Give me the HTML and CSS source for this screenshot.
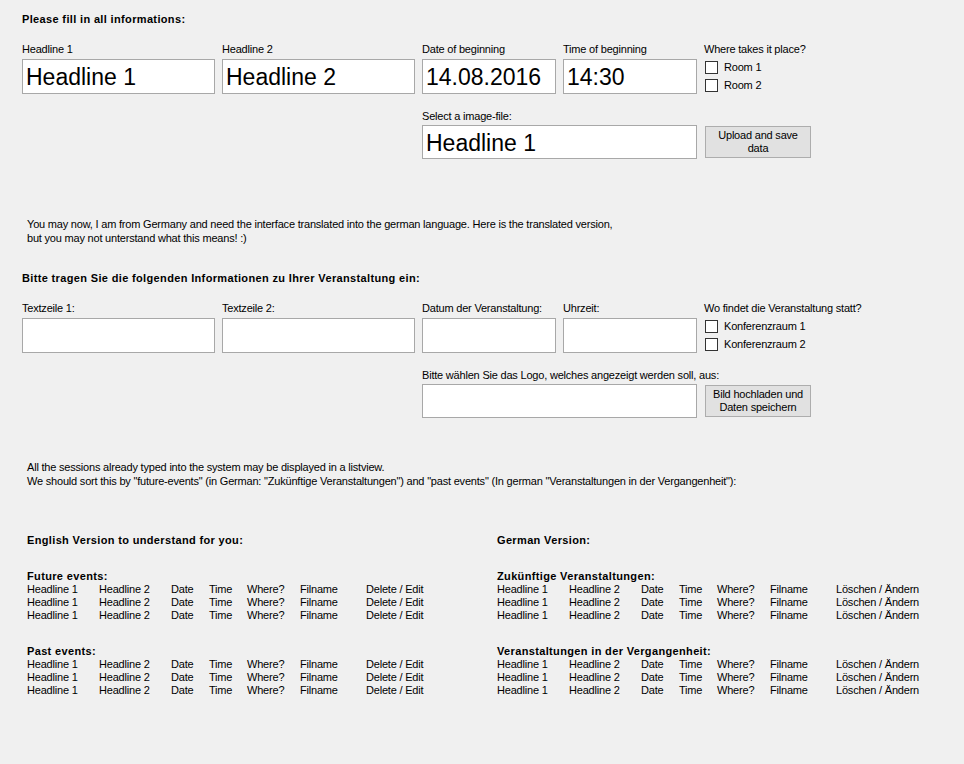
FILE: index.html
```html
<!DOCTYPE html>
<html lang="en">
<head>
<meta charset="utf-8">
<title>Event form</title>
<link rel="stylesheet" href="styles.css">
</head>
<body>
<div class="page">
  <section class="form form-en">
    <h2 class="title">Please fill in all informations:</h2>
    <div class="fields">
      <div class="field"><label class="lbl">Headline 1</label><div class="box">Headline 1</div></div>
      <div class="field"><label class="lbl">Headline 2</label><div class="box">Headline 2</div></div>
      <div class="field"><label class="lbl">Date of beginning</label><div class="box">14.08.2016</div></div>
      <div class="field"><label class="lbl">Time of beginning</label><div class="box">14:30</div></div>
      <div class="field places">
        <label class="lbl">Where takes it place?</label>
        <div class="check"><span class="cb"></span>Room 1</div>
        <div class="check"><span class="cb"></span>Room 2</div>
      </div>
      <div class="field file"><label class="lbl">Select a image-file:</label><div class="box box-file">Headline 1</div></div>
      <button class="btn">Upload and save<br>data</button>
    </div>
  </section>

  <p class="note note-1">You may now, I am from Germany and need the interface translated into the german language. Here is the translated version,<br>but you may not unterstand what this means! :)</p>

  <section class="form form-de">
    <h2 class="title">Bitte tragen Sie die folgenden Informationen zu Ihrer Veranstaltung ein:</h2>
    <div class="fields">
      <div class="field"><label class="lbl">Textzeile 1:</label><div class="box"></div></div>
      <div class="field"><label class="lbl">Textzeile 2:</label><div class="box"></div></div>
      <div class="field"><label class="lbl">Datum der Veranstaltung:</label><div class="box"></div></div>
      <div class="field"><label class="lbl">Uhrzeit:</label><div class="box"></div></div>
      <div class="field places">
        <label class="lbl">Wo findet die Veranstaltung statt?</label>
        <div class="check"><span class="cb"></span>Konferenzraum 1</div>
        <div class="check"><span class="cb"></span>Konferenzraum 2</div>
      </div>
      <div class="field file"><label class="lbl">Bitte wählen Sie das Logo, welches angezeigt werden soll, aus:</label><div class="box box-file"></div></div>
      <button class="btn">Bild hochladen und<br>Daten speichern</button>
    </div>
  </section>

  <p class="note note-2">All the sessions already typed into the system may be displayed in a listview.<br>We should sort this by "future-events" (in German: "Zukünftige Veranstaltungen") and "past events" (In german "Veranstaltungen in der Vergangenheit"):</p>

  <div class="lists">
    <div class="list-block list-en">
      <h3 class="title">English Version to understand for you:</h3>
      <h4 class="title sub">Future events:</h4>
      <div class="rows">
        <span>Headline 1</span><span>Headline 2</span><span>Date</span><span>Time</span><span>Where?</span><span>Filname</span><span>Delete / Edit</span>
        <span>Headline 1</span><span>Headline 2</span><span>Date</span><span>Time</span><span>Where?</span><span>Filname</span><span>Delete / Edit</span>
        <span>Headline 1</span><span>Headline 2</span><span>Date</span><span>Time</span><span>Where?</span><span>Filname</span><span>Delete / Edit</span>
      </div>
      <h4 class="title sub">Past events:</h4>
      <div class="rows">
        <span>Headline 1</span><span>Headline 2</span><span>Date</span><span>Time</span><span>Where?</span><span>Filname</span><span>Delete / Edit</span>
        <span>Headline 1</span><span>Headline 2</span><span>Date</span><span>Time</span><span>Where?</span><span>Filname</span><span>Delete / Edit</span>
        <span>Headline 1</span><span>Headline 2</span><span>Date</span><span>Time</span><span>Where?</span><span>Filname</span><span>Delete / Edit</span>
      </div>
    </div>
    <div class="list-block list-de">
      <h3 class="title">German Version:</h3>
      <h4 class="title sub">Zukünftige Veranstaltungen:</h4>
      <div class="rows">
        <span>Headline 1</span><span>Headline 2</span><span>Date</span><span>Time</span><span>Where?</span><span>Filname</span><span>Löschen / Ändern</span>
        <span>Headline 1</span><span>Headline 2</span><span>Date</span><span>Time</span><span>Where?</span><span>Filname</span><span>Löschen / Ändern</span>
        <span>Headline 1</span><span>Headline 2</span><span>Date</span><span>Time</span><span>Where?</span><span>Filname</span><span>Löschen / Ändern</span>
      </div>
      <h4 class="title sub">Veranstaltungen in der Vergangenheit:</h4>
      <div class="rows">
        <span>Headline 1</span><span>Headline 2</span><span>Date</span><span>Time</span><span>Where?</span><span>Filname</span><span>Löschen / Ändern</span>
        <span>Headline 1</span><span>Headline 2</span><span>Date</span><span>Time</span><span>Where?</span><span>Filname</span><span>Löschen / Ändern</span>
        <span>Headline 1</span><span>Headline 2</span><span>Date</span><span>Time</span><span>Where?</span><span>Filname</span><span>Löschen / Ändern</span>
      </div>
    </div>
  </div>
</div>
</body>
</html>
```

FILE: styles.css
```css
html, body {
  margin: 0;
  padding: 0;
  background: #f0f0f0;
}

body {
  width: 964px;
  height: 764px;
  overflow: hidden;
  font-family: "Liberation Sans", Arial, sans-serif;
  font-size: 11px;
  line-height: 13px;
  letter-spacing: -0.2px;
  color: #000;
}

.page {
  padding: 13px 0 0 22px;
}

.title {
  margin: 0;
  font-size: 11px;
  line-height: 13px;
  font-weight: bold;
  letter-spacing: 0.35px;
  white-space: nowrap;
}

.form .title {
  margin-bottom: 17px;
}

.fields {
  display: grid;
  grid-template-columns: 193px 193px 134px 134px 160px;
  column-gap: 7px;
  row-gap: 16px;
  align-items: start;
}

.field {
  display: flex;
  flex-direction: column;
}

.lbl {
  display: block;
  height: 13px;
  line-height: 13px;
  white-space: nowrap;
  margin-bottom: 3px;
}

.box {
  box-sizing: border-box;
  height: 35px;
  background: #fff;
  border: 1px solid #a8a8a8;
  padding: 2px 3px 0;
  font-size: 23px;
  line-height: 31px;
  letter-spacing: 0;
  white-space: nowrap;
  overflow: hidden;
}

.places .lbl {
  margin-bottom: 2px;
}

.check {
  display: flex;
  align-items: center;
  height: 18px;
  padding-left: 1px;
  white-space: nowrap;
}

.cb {
  box-sizing: border-box;
  width: 13px;
  height: 13px;
  border: 1px solid #333;
  background: #fff;
  margin-right: 6px;
  flex: none;
}

.file {
  grid-column: 3 / 5;
}

.file .lbl {
  margin-bottom: 2px;
}

.box-file {
  height: 34px;
  line-height: 30px;
}

.btn {
  grid-column: 5;
  align-self: end;
  justify-self: start;
  box-sizing: border-box;
  width: 106px;
  height: 32px;
  margin: 0 0 1px 1px;
  padding: 0;
  background: #e1e1e1;
  border: 1px solid #adadad;
  font-family: "Liberation Sans", Arial, sans-serif;
  font-size: 11px;
  line-height: 13px;
  letter-spacing: -0.2px;
  color: #000;
  text-align: center;
}

.note {
  margin: 0 0 0 5px;
  line-height: 14px;
}

.note-1 {
  margin-top: 58px;
  margin-bottom: 27px;
}

.note-2 {
  margin-top: 42px;
  margin-bottom: 46px;
}

.lists {
  display: flex;
  padding-left: 5px;
}

.list-block {
  width: 470px;
  flex: none;
}

.sub {
  margin-top: 23px;
}

.rows {
  display: grid;
  grid-template-columns: 72px 72px 38px 38px 53px 66px auto;
  line-height: 13px;
  white-space: nowrap;
}
```
